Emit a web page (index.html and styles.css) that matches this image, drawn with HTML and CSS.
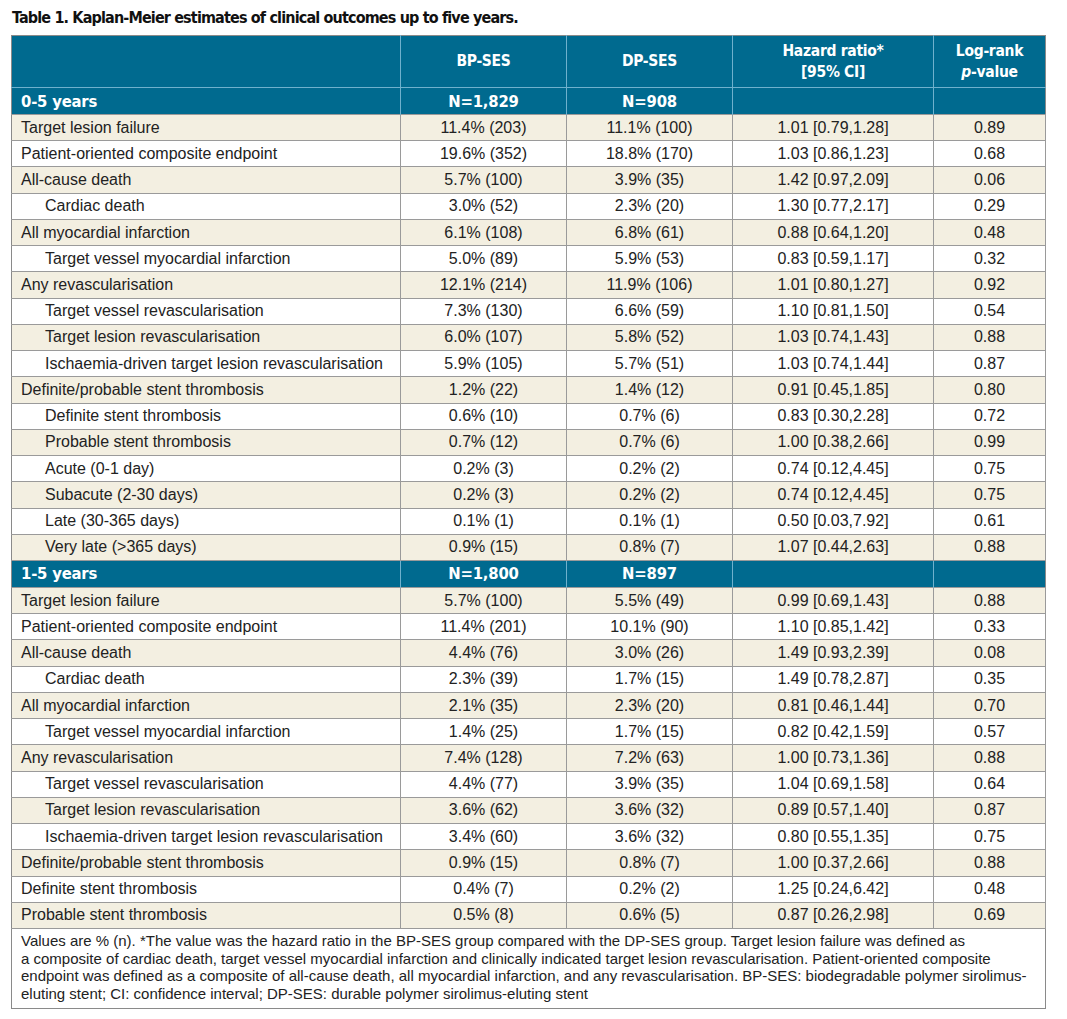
FILE: index.html
```html
<!DOCTYPE html>
<html>
<head>
<meta charset="utf-8">
<link rel="stylesheet" href="styles.css">
</head>
<body>
<div class="page">
  <h1 class="title">Table 1. Kaplan-Meier estimates of clinical outcomes up to five years.</h1>
  <table class="km">
    <colgroup>
      <col class="c1"><col class="c2"><col class="c3"><col class="c4"><col class="c5">
    </colgroup>
    <thead>
      <tr class="head">
        <th></th>
        <th>BP-SES</th>
        <th>DP-SES</th>
        <th>Hazard ratio*<br>[95% CI]</th>
        <th>Log-rank<br><i>p</i>-value</th>
      </tr>
    </thead>
    <tbody>
      <tr class="sec"><td class="lab">0-5 years</td><td>N=1,829</td><td>N=908</td><td></td><td></td></tr>
      <tr><td class="lab">Target lesion failure</td><td>11.4% (203)</td><td>11.1% (100)</td><td>1.01 [0.79,1.28]</td><td>0.89</td></tr>
      <tr><td class="lab">Patient-oriented composite endpoint</td><td>19.6% (352)</td><td>18.8% (170)</td><td>1.03 [0.86,1.23]</td><td>0.68</td></tr>
      <tr><td class="lab">All-cause death</td><td>5.7% (100)</td><td>3.9% (35)</td><td>1.42 [0.97,2.09]</td><td>0.06</td></tr>
      <tr><td class="lab ind">Cardiac death</td><td>3.0% (52)</td><td>2.3% (20)</td><td>1.30 [0.77,2.17]</td><td>0.29</td></tr>
      <tr><td class="lab">All myocardial infarction</td><td>6.1% (108)</td><td>6.8% (61)</td><td>0.88 [0.64,1.20]</td><td>0.48</td></tr>
      <tr><td class="lab ind">Target vessel myocardial infarction</td><td>5.0% (89)</td><td>5.9% (53)</td><td>0.83 [0.59,1.17]</td><td>0.32</td></tr>
      <tr><td class="lab">Any revascularisation</td><td>12.1% (214)</td><td>11.9% (106)</td><td>1.01 [0.80,1.27]</td><td>0.92</td></tr>
      <tr><td class="lab ind">Target vessel revascularisation</td><td>7.3% (130)</td><td>6.6% (59)</td><td>1.10 [0.81,1.50]</td><td>0.54</td></tr>
      <tr><td class="lab ind">Target lesion revascularisation</td><td>6.0% (107)</td><td>5.8% (52)</td><td>1.03 [0.74,1.43]</td><td>0.88</td></tr>
      <tr><td class="lab ind">Ischaemia-driven target lesion revascularisation</td><td>5.9% (105)</td><td>5.7% (51)</td><td>1.03 [0.74,1.44]</td><td>0.87</td></tr>
      <tr><td class="lab">Definite/probable stent thrombosis</td><td>1.2% (22)</td><td>1.4% (12)</td><td>0.91 [0.45,1.85]</td><td>0.80</td></tr>
      <tr><td class="lab ind">Definite stent thrombosis</td><td>0.6% (10)</td><td>0.7% (6)</td><td>0.83 [0.30,2.28]</td><td>0.72</td></tr>
      <tr><td class="lab ind">Probable stent thrombosis</td><td>0.7% (12)</td><td>0.7% (6)</td><td>1.00 [0.38,2.66]</td><td>0.99</td></tr>
      <tr><td class="lab ind">Acute (0-1 day)</td><td>0.2% (3)</td><td>0.2% (2)</td><td>0.74 [0.12,4.45]</td><td>0.75</td></tr>
      <tr><td class="lab ind">Subacute (2-30 days)</td><td>0.2% (3)</td><td>0.2% (2)</td><td>0.74 [0.12,4.45]</td><td>0.75</td></tr>
      <tr><td class="lab ind">Late (30-365 days)</td><td>0.1% (1)</td><td>0.1% (1)</td><td>0.50 [0.03,7.92]</td><td>0.61</td></tr>
      <tr><td class="lab ind">Very late (&gt;365 days)</td><td>0.9% (15)</td><td>0.8% (7)</td><td>1.07 [0.44,2.63]</td><td>0.88</td></tr>
    </tbody>
    <tbody>
      <tr class="sec"><td class="lab">1-5 years</td><td>N=1,800</td><td>N=897</td><td></td><td></td></tr>
      <tr><td class="lab">Target lesion failure</td><td>5.7% (100)</td><td>5.5% (49)</td><td>0.99 [0.69,1.43]</td><td>0.88</td></tr>
      <tr><td class="lab">Patient-oriented composite endpoint</td><td>11.4% (201)</td><td>10.1% (90)</td><td>1.10 [0.85,1.42]</td><td>0.33</td></tr>
      <tr><td class="lab">All-cause death</td><td>4.4% (76)</td><td>3.0% (26)</td><td>1.49 [0.93,2.39]</td><td>0.08</td></tr>
      <tr><td class="lab ind">Cardiac death</td><td>2.3% (39)</td><td>1.7% (15)</td><td>1.49 [0.78,2.87]</td><td>0.35</td></tr>
      <tr><td class="lab">All myocardial infarction</td><td>2.1% (35)</td><td>2.3% (20)</td><td>0.81 [0.46,1.44]</td><td>0.70</td></tr>
      <tr><td class="lab ind">Target vessel myocardial infarction</td><td>1.4% (25)</td><td>1.7% (15)</td><td>0.82 [0.42,1.59]</td><td>0.57</td></tr>
      <tr><td class="lab">Any revascularisation</td><td>7.4% (128)</td><td>7.2% (63)</td><td>1.00 [0.73,1.36]</td><td>0.88</td></tr>
      <tr><td class="lab ind">Target vessel revascularisation</td><td>4.4% (77)</td><td>3.9% (35)</td><td>1.04 [0.69,1.58]</td><td>0.64</td></tr>
      <tr><td class="lab ind">Target lesion revascularisation</td><td>3.6% (62)</td><td>3.6% (32)</td><td>0.89 [0.57,1.40]</td><td>0.87</td></tr>
      <tr><td class="lab ind">Ischaemia-driven target lesion revascularisation</td><td>3.4% (60)</td><td>3.6% (32)</td><td>0.80 [0.55,1.35]</td><td>0.75</td></tr>
      <tr><td class="lab">Definite/probable stent thrombosis</td><td>0.9% (15)</td><td>0.8% (7)</td><td>1.00 [0.37,2.66]</td><td>0.88</td></tr>
      <tr><td class="lab">Definite stent thrombosis</td><td>0.4% (7)</td><td>0.2% (2)</td><td>1.25 [0.24,6.42]</td><td>0.48</td></tr>
      <tr><td class="lab">Probable stent thrombosis</td><td>0.5% (8)</td><td>0.6% (5)</td><td>0.87 [0.26,2.98]</td><td>0.69</td></tr>
    </tbody>
    <tfoot>
      <tr class="foot">
        <td colspan="5">Values are % (n). *The value was the hazard ratio in the BP-SES group compared with the DP-SES group. Target lesion failure was defined as<br>a composite of cardiac death, target vessel myocardial infarction and clinically indicated target lesion revascularisation. Patient-oriented composite<br>endpoint was defined as a composite of all-cause death, all myocardial infarction, and any revascularisation. BP-SES: biodegradable polymer sirolimus-<br>eluting stent; CI: confidence interval; DP-SES: durable polymer sirolimus-eluting stent</td>
      </tr>
    </tfoot>
  </table>
</div>
</body>
</html>
```

FILE: styles.css
```css
* { box-sizing: border-box; }

html, body {
  margin: 0;
  padding: 0;
  background: #ffffff;
}

.page {
  padding: 7px 0 0 11px;
  width: 1067px;
  font-family: "Liberation Sans", Arial, sans-serif;
  color: #222222;
}

.title {
  margin: 0 0 6px 1px;
  font-family: "Liberation Sans Narrow", "DejaVu Sans Condensed", sans-serif;
  font-stretch: condensed;
  font-weight: bold;
  font-size: 16px;
  letter-spacing: -0.85px;
  line-height: 22px;
  color: #111111;
}

.km {
  border-collapse: collapse;
  table-layout: fixed;
  width: 1034px;
  border: 1px solid #8a8a8a;
}

.c1 { width: 389px; }
.c2 { width: 166px; }
.c3 { width: 166px; }
.c4 { width: 201px; }
.c5 { width: 112px; }

.head th {
  background: #006a8f;
  color: #ffffff;
  font-family: "Liberation Sans Narrow", "DejaVu Sans Condensed", sans-serif;
  font-stretch: condensed;
  font-weight: bold;
  font-size: 15.5px;
  letter-spacing: -0.3px;
  line-height: 21px;
  height: 52px;
  padding: 0;
  text-align: center;
  vertical-align: middle;
  border-left: 1px solid #6fb1cd;
  border-bottom: 1px solid #6fb1cd;
}
.head th:first-child { border-left: none; }

.sec td {
  background: #006a8f;
  color: #ffffff;
  font-family: "Liberation Sans Narrow", "DejaVu Sans Condensed", sans-serif;
  font-stretch: condensed;
  font-weight: bold;
  font-size: 16.5px;
  letter-spacing: -0.2px;
  height: 27px;
  padding: 0;
  text-align: center;
  vertical-align: middle;
  border-left: 1px solid #6fb1cd;
}
.sec td.lab { border-left: none; padding-left: 9px; text-align: left; }

tbody tr:not(.sec) td {
  height: 26.24px;
  padding: 0;
  font-size: 16px;
  text-align: center;
  vertical-align: middle;
  border: 1px solid #9a9a9a;
  border-left: 1px solid #6e6e6e;
  background: #ffffff;
}
tbody tr:nth-child(even) td { background: #f3efe1; }

tbody tr td.lab { text-align: left; padding-left: 9px; border-left: none; }
tbody tr td.lab.ind { padding-left: 33px; }

.foot td {
  font-size: 15px;
  line-height: 17.7px;
  padding: 3px 9px 5px;
  border-top: 1px solid #8a8a8a;
  background: #ffffff;
  color: #222222;
}
```
